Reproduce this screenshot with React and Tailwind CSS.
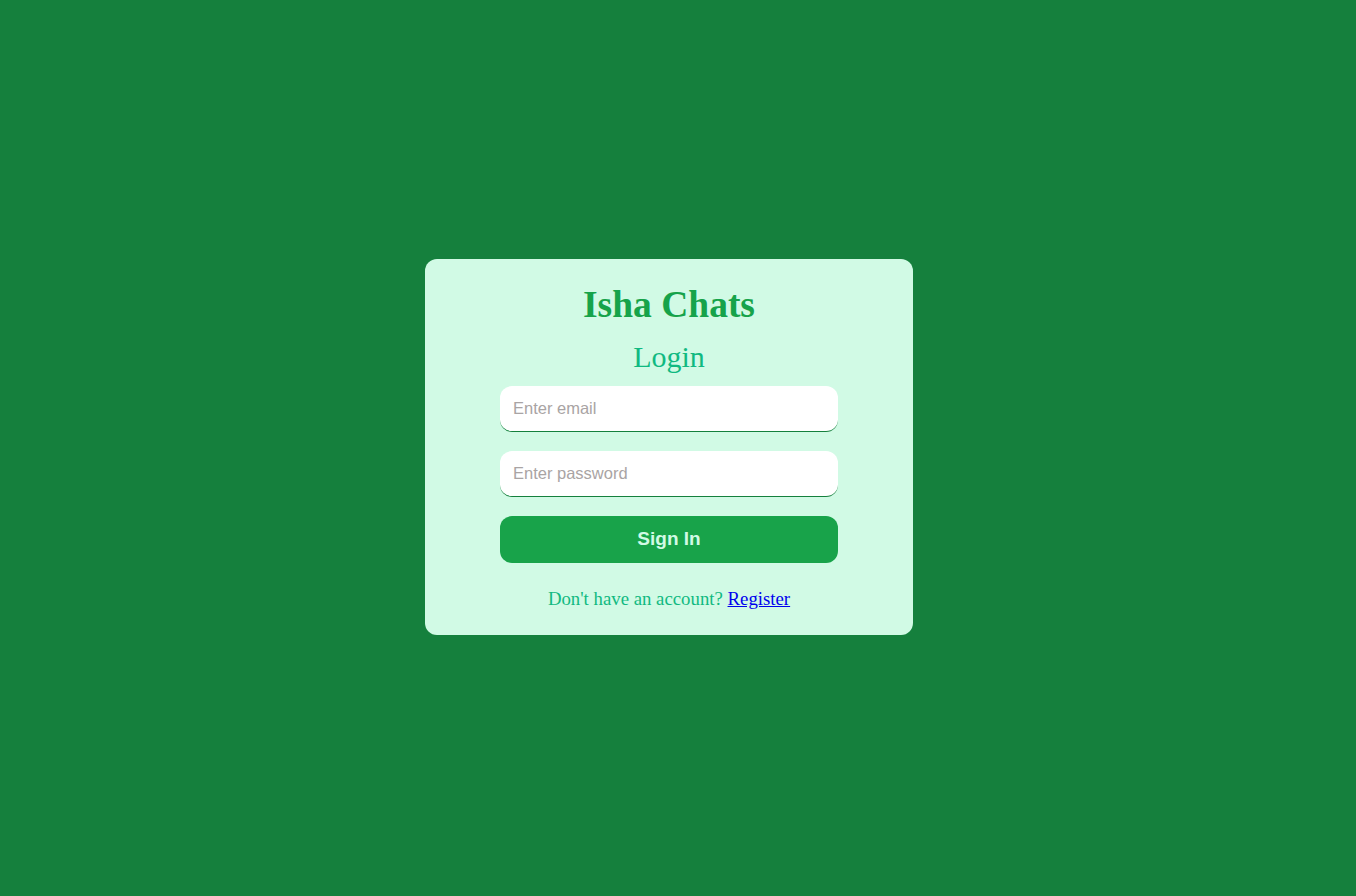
export default function App() {
  return (
    <div className="min-h-screen bg-[#15803d] flex items-center justify-center pr-[18px] pb-[2px] font-['Liberation_Serif',serif]">
      <div className="w-[488px] bg-[#d1fae5] rounded-xl flex flex-col items-center pt-[26px] pb-[22px]">
        {/* Header */}
        <h1 className="text-[37.5px] leading-[39px] font-bold text-[#16a34a]">Isha Chats</h1>
        <h2 className="mt-[15px] text-3xl leading-9 text-[#10b981]">Login</h2>

        {/* Form */}
        <input
          type="email"
          placeholder="Enter email"
          className="mt-[11px] w-[338px] h-[46px] bg-white rounded-xl border-b border-[#15803d] pl-[13px] pr-3 text-[16.5px] font-['Liberation_Sans',sans-serif] text-gray-900 placeholder:text-[#a9a4a4] focus:outline-none"
        />
        <input
          type="password"
          placeholder="Enter password"
          className="mt-[19px] w-[338px] h-[46px] bg-white rounded-xl border-b border-[#15803d] pl-[13px] pr-3 text-[16.5px] font-['Liberation_Sans',sans-serif] text-gray-900 placeholder:text-[#a9a4a4] focus:outline-none"
        />
        <button className="mt-[19px] w-[338px] h-[47px] rounded-xl bg-[#18a34a] text-[#d1fae5] text-[19px] font-bold font-['Liberation_Sans',sans-serif]">
          Sign In
        </button>

        <p className="mt-[22px] text-[18.8px] leading-[28px] text-[#10b981]">
          Don't have an account?{' '}
          <a href="#" className="text-[#0000ee] underline">
            Register
          </a>
        </p>
      </div>
    </div>
  );
}
